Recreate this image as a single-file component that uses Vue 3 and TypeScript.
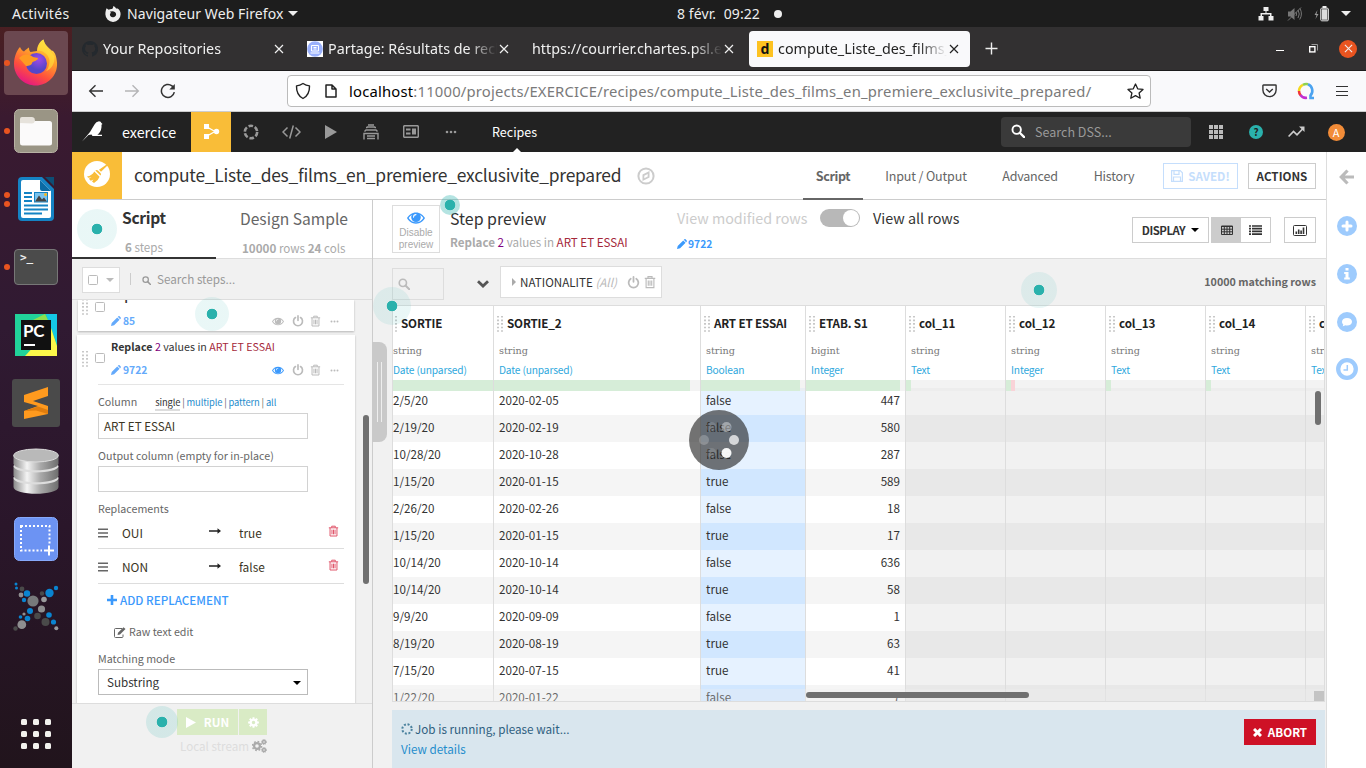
<script setup lang="ts">
interface Tab { title: string; icon: '' | 'github' | 'partage' | 'd'; active?: boolean }
interface Column { name: string; type: string; meaning: string; width: number; ok: number; bad?: number; cls?: string }
interface Ball { x: number; y: number; r: number; c: string }

const tabs: Tab[] = [
  { title: 'Your Repositories', icon: 'github' },
  { title: 'Partage: Résultats de recherche', icon: 'partage' },
  { title: 'https://courrier.chartes.psl.eu', icon: '' },
  { title: 'compute_Liste_des_films_en', icon: 'd', active: true },
]

const columns: Column[] = [
  { name: 'SORTIE', type: 'string', meaning: 'Date (unparsed)', width: 101, ok: 100, cls: 'first' },
  { name: 'SORTIE_2', type: 'string', meaning: 'Date (unparsed)', width: 207, ok: 196 },
  { name: 'ART ET ESSAI', type: 'string', meaning: 'Boolean', width: 105, ok: 99, cls: 'hl' },
  { name: 'ETAB. S1', type: 'bigint', meaning: 'Integer', width: 100, ok: 94, cls: 'num' },
  { name: 'col_11', type: 'string', meaning: 'Text', width: 100, ok: 5, cls: 'void' },
  { name: 'col_12', type: 'string', meaning: 'Integer', width: 100, ok: 5, bad: 4, cls: 'void' },
  { name: 'col_13', type: 'string', meaning: 'Text', width: 100, ok: 5, cls: 'void' },
  { name: 'col_14', type: 'string', meaning: 'Text', width: 100, ok: 5, cls: 'void' },
  { name: 'col_15', type: 'string', meaning: 'Text', width: 100, ok: 0, cls: 'void' },
]

const rows: string[][] = [
  ['2/5/20', '2020-02-05', 'false', '447'],
  ['2/19/20', '2020-02-19', 'false', '580'],
  ['10/28/20', '2020-10-28', 'false', '287'],
  ['1/15/20', '2020-01-15', 'true', '589'],
  ['2/26/20', '2020-02-26', 'false', '18'],
  ['1/15/20', '2020-01-15', 'true', '17'],
  ['10/14/20', '2020-10-14', 'false', '636'],
  ['10/14/20', '2020-10-14', 'true', '58'],
  ['9/9/20', '2020-09-09', 'false', '1'],
  ['8/19/20', '2020-08-19', 'true', '63'],
  ['7/15/20', '2020-07-15', 'true', '41'],
  ['1/22/20', '2020-01-22', 'false', '7'],
]

const balls: Ball[] = [
  { x: 3, y: 2, r: 1.5, c: '#0a84d0' }, { x: 3.5, y: 6, r: 1.5, c: '#0a84d0' }, { x: 9, y: 7, r: 2.4, c: '#4a4a4a' },
  { x: 8, y: 13, r: 2.4, c: '#8e8e90' }, { x: 14, y: 11.5, r: 3.2, c: '#0a84d0' }, { x: 11, y: 18, r: 2.2, c: '#0a84d0' },
  { x: 20, y: 19, r: 5.6, c: '#77797b' }, { x: 29, y: 11.5, r: 2.2, c: '#4a4a4a' }, { x: 36.5, y: 11, r: 4.2, c: '#0a84d0' },
  { x: 43, y: 6, r: 2.2, c: '#0a84d0' }, { x: 31, y: 17.5, r: 2.8, c: '#9a9a9c' }, { x: 28.5, y: 27, r: 3.6, c: '#8e8e90' },
  { x: 17, y: 29, r: 3, c: '#0a84d0' }, { x: 11, y: 32, r: 1.6, c: '#8e8e90' }, { x: 7.5, y: 35, r: 1.8, c: '#0a84d0' },
  { x: 14.5, y: 36.5, r: 2.8, c: '#0a84d0' }, { x: 24.5, y: 34, r: 3.3, c: '#4a4a4a' }, { x: 36, y: 33, r: 2.8, c: '#0a84d0' },
  { x: 32.5, y: 40, r: 4, c: '#4a4a4a' }, { x: 40.5, y: 40, r: 2.6, c: '#0a84d0' }, { x: 8.8, y: 42.7, r: 4.4, c: '#8e8e90' },
  { x: 2.5, y: 46.5, r: 2.2, c: '#4a4a4a' }, { x: 43.3, y: 46.3, r: 2, c: '#9a9a9c' },
]

const replacements = [
  { from: 'OUI', to: 'true' },
  { from: 'NON', to: 'false' },
]

const grid9 = [0, 1, 2, 3, 4, 5, 6, 7, 8]
</script>

<template>
  <svg class="defs" width="0" height="0">
    <defs>
      <symbol id="eye" viewBox="0 0 24 16">
        <path fill="currentColor" fill-rule="evenodd" d="M12 .5C6.500.5 2.400 3.800 0 8c2.400 4.200 6.500 7.500 12 7.500S21.600 12.200 24 8C21.600 3.800 17.500.5 12 .5zM2.200 8C3.300 6.200 4.800 4.700 6.600 3.600 5.900 4.700 5.600 5.800 5.600 7a6.400 6.400 0 0 0 12.800 0c0-1.200-.3-2.300-1-3.400 1.800 1.100 3.300 2.600 4.400 4.400-2.200 3.500-5.600 5.800-9.800 5.800S4.400 11.500 2.200 8zM12 2.800a4 4 0 0 0-3.900 4.200c0 .9 1.300.9 1.300 0A2.700 2.700 0 0 1 12 4.200c.9 0 .9-1.400 0-1.400z" />
      </symbol>
      <symbol id="power" viewBox="0 0 16 16">
        <path fill="none" stroke="currentColor" stroke-width="2.200" stroke-linecap="round" d="M4.600 3.400a6 6 0 1 0 6.800 0M8 1.200v6" />
      </symbol>
      <symbol id="trash" viewBox="0 0 16 18">
        <path fill="none" stroke="currentColor" stroke-width="1.500" d="M1 4.200h14M5.300 4V1.800h5.400V4M2.800 4.500v12h10.400v-12M5.700 7v7M8 7v7M10.300 7v7" />
      </symbol>
      <symbol id="pencil" viewBox="0 0 14 14">
        <path fill="currentColor" d="M0 14l1-4.300L8.700 2 12 5.300 4.300 13zM9.500 1.200l.9-.8q.8-.7 1.600 0l1.600 1.600q.7.800 0 1.600l-.8.9z" />
      </symbol>
      <symbol id="mag" viewBox="0 0 16 16">
        <circle cx="6.500" cy="6.500" r="4.800" fill="none" stroke="currentColor" stroke-width="2.200" />
        <path d="M10 10l5 5" stroke="currentColor" stroke-width="2.600" stroke-linecap="round" />
      </symbol>
      <symbol id="gear" viewBox="0 0 16 16">
        <circle cx="8" cy="8" r="4.200" fill="none" stroke="currentColor" stroke-width="3.400" />
        <path d="M8 .2v15.600M.2 8h15.600M2.500 2.500l11 11M13.500 2.500l-11 11" stroke="currentColor" stroke-width="2.800" stroke-dasharray="3 9.600 3" />
      </symbol>
      <symbol id="drag" viewBox="0 0 6 16">
        <path d="M1 0v16M5 0v16" stroke="currentColor" stroke-width="1.600" stroke-dasharray="1.600 1.950" />
      </symbol>
      <symbol id="x" viewBox="0 0 10 10"><path d="M1 1l8 8M9 1l-8 8" stroke="currentColor" stroke-width="1.200" /></symbol>
      <symbol id="dots" viewBox="0 0 12 4"><circle cx="2" cy="2" r="1.300" fill="currentColor" /><circle cx="6" cy="2" r="1.300" fill="currentColor" /><circle cx="10" cy="2" r="1.300" fill="currentColor" /></symbol>
    </defs>
  </svg>

  <div class="screen">
    <header class="top">
      <span class="act">Activités</span>
      <svg class="ffmono" width="16" height="16" viewBox="0 0 16 16"><path fill="#eee" fill-rule="evenodd" d="M1.600 2.200l2 1.600C4.800 3 6 2.900 7 3c1-.6 1.200-1.800 1.300-3 1.300.5 2.200 1.400 2.800 2.400l1.500.2c2 1.300 3 3.300 3 5.600A7.600 7.600 0 0 1 .4 8.500C.3 6.200.8 4 1.600 2.200zM8 5.200L5 5.500 6 7c-1.500.4-1.800 3.800 1.800 4.300 2 .2 3.500-1.300 3.300-3.300-.2-1.200-1-2-1.900-2.300z" /></svg>
      <span class="app">Navigateur Web Firefox</span>
      <i class="down"></i>
      <span class="clock">8 févr.&nbsp; 09:22</span>
      <i class="note"></i>
      <svg class="net" width="16" height="14" viewBox="0 0 16 14"><path fill="#eee" d="M5.500 0h5v4h-2v2h5v3H15.500v4.500h-5V9H12V7.500H4V9h1.500v4.500h-5V9h2V6h5V4h-2z" /></svg>
      <svg class="vol" width="15" height="14" viewBox="0 0 15 14"><path fill="#777" d="M1 4.500h2.500L7.500 1v12L3.500 9.500H1z" /><path fill="none" stroke="#777" d="M9 5q1.200 2 0 4M11 3q2.500 4 0 8M13 1.500q3 5.500-.3 11M14 .5L1 13.500" /></svg>
      <svg class="bat" width="16" height="16" viewBox="0 0 16 16"><path fill="#999" d="M3.500 4L.5 9h2L1.500 13 4.500 8h-2z" /><rect x="6.800" y="2.200" width="7.500" height="12.600" rx="1" fill="#ddd" stroke="#eee" /><rect x="8.500" y="0" width="4" height="2" fill="#eee" /><rect x="7.500" y="3" width="6" height="11" fill="none" stroke="#444" stroke-width=".7" /></svg>
      <i class="down last"></i>
    </header>

    <div class="below">
      <aside class="dock">
        <div class="slot"><i class="led"></i>
          <div class="tile"><svg width="46" height="48" viewBox="0 0 46 48">
            <defs>
              <linearGradient id="fx" x1=".8" y1="0" x2=".3" y2="1"><stop offset="0" stop-color="#fff44f" /><stop offset=".35" stop-color="#ffa52a" /><stop offset=".7" stop-color="#ff4f3d" /><stop offset="1" stop-color="#e31587" /></linearGradient>
              <radialGradient id="fg" cx=".6" cy=".3"><stop offset="0" stop-color="#a04ae8" /><stop offset="1" stop-color="#5546c8" /></radialGradient>
            </defs>
            <path fill="url(#fx)" d="M7 8c1 2 2 4 4 4.500 2-2 4-3.500 5-4 0 2 .5 3.500 1.500 4.500L24 12c0-5 3-10 6.500-11.500 1 5 5 8 8 11 3 .5 5 5 5.500 12C45 37 34 46.500 23 46.500S1 38 1 25C1 18 4 11 7 8z" />
            <circle cx="23.500" cy="24.500" r="10.500" fill="url(#fg)" />
            <path fill="#ff9a22" d="M6 19c5-5 11-4 14-1l5 1c0 3-5 3-6 5 0 2-3 3-6 3z" />
            <path fill="#ffe13c" d="M30.500.5c-3 2-6 6-6 11 5 0 11 3 12 10 0 8-4 11-4 11 7-3 9-8 9-15-3-5-9-8-11-17z" opacity=".65" />
          </svg></div>
        </div>
        <div class="slot"><i class="led"></i>
          <svg width="44" height="44" viewBox="0 0 44 44"><rect x=".5" y=".5" width="43" height="43" rx="5" fill="#9a9585" stroke="#b8b2a4" /><rect x="6" y="12" width="32" height="24.500" rx="2.500" fill="#fbfafa" /><path fill="#e6e2db" d="M6 14v-4q0-2 2-2h10q2 0 2.500 1.500L21 12q-1 2.500-3 2.500z" /></svg>
        </div>
        <div class="slot"><span class="leds"><i class="led"></i><i class="led"></i></span>
          <svg width="36" height="44" viewBox="0 0 36 44"><path fill="#1583c4" d="M4 0h20l12 12v28q0 4-4 4H4q-4 0-4-4V4q0-4 4-4z" /><path fill="#0d4e75" d="M27 0h9v9z" /><path fill="#fff" d="M5 3h17l11 11v25q0 2-2 2H5q-2 0-2-2V5q0-2 2-2z" /><path fill="#0b6aa3" d="M22 3l11 11h-9q-2 0-2-2z" /><path stroke="#1583c4" stroke-width="1.800" d="M6 16h8M6 20h8M6 24h8M6 28.500h24M6 32.500h24M6 36.500h18" /><rect x="16.500" y="15.500" width="13" height="9.500" fill="#7ac3ee" stroke="#1583c4" /><path fill="#444" d="M17 24.500l4-6 3 4 2-2 3 4z" /><circle cx="27.500" cy="17.500" r="1.500" fill="#f5b921" /></svg>
        </div>
        <div class="slot"><i class="led"></i><div class="term">&gt;_</div></div>
        <div class="slot"><div class="pycharm">
          <svg class="pybg" width="42" height="42" viewBox="0 0 42 42"><rect width="42" height="42" fill="#21d39a" /><path fill="#8fdf4f" d="M14 8L30 0l6 12-8 30H20z" /><path fill="#14c8e6" d="M31 0h11v30z" /><path fill="#fcf84a" d="M10 42l26-28 6 18v10z" /></svg>
          <div class="pc"><span>PC</span><i></i></div>
        </div></div>
        <div class="slot"><div class="sublime"><svg width="24" height="32" viewBox="0 0 24 32"><path fill="#ff9a1e" d="M0 8L24 0v9L9 14l15 5v8L0 32v-8l14-5L0 15z" /><path fill="#e07d0e" d="M0 24l14-4.500L24 23v4l-12-3.500z" /></svg></div></div>
        <div class="slot"><svg width="46" height="46" viewBox="0 0 46 46">
          <defs><linearGradient id="db"><stop offset="0" stop-color="#8a8a8a" /><stop offset=".3" stop-color="#f4f4f4" /><stop offset=".6" stop-color="#a9a9a9" /><stop offset="1" stop-color="#6e6e6e" /></linearGradient></defs>
          <path fill="url(#db)" d="M.5 29v10c0 9 45 9 45 0V29z" /><path fill="#ddd" d="M.5 30c0 8.500 45 8.500 45 0l-2-3H2z" />
          <path fill="url(#db)" d="M.5 18v9.500c0 9 45 9 45 0V18z" /><path fill="#ddd" d="M.5 18c0 8.500 45 8.500 45 0l-2-3H2z" />
          <path fill="url(#db)" d="M.5 7v8.500c0 9 45 9 45 0V7z" /><ellipse cx="23" cy="7.500" rx="22.300" ry="6.500" fill="#b9b9b9" stroke="#ddd" />
        </svg></div>
        <div class="slot"><svg width="44" height="44" viewBox="0 0 44 44"><rect x=".5" y=".5" width="43" height="43" rx="5" fill="#6c93f3" stroke="#87a9fb" /><rect x="7" y="9" width="28.500" height="24.500" fill="none" stroke="#fff" stroke-width="2" stroke-dasharray="2 2" /><path stroke="#6c93f3" stroke-width="5" d="M28 33.500h14M35 28v11" /><path stroke="#fff" stroke-width="2" d="M30 33.500h10M35 28.500v10" /></svg></div>
        <div class="slot"><svg width="46" height="50" viewBox="0 0 46 50"><circle v-for="(b, i) in balls" :key="i" :cx="b.x" :cy="b.y" :r="b.r" :fill="b.c" /></svg></div>
        <div class="apps"><i v-for="n in grid9" :key="n"></i></div>
      </aside>

      <section class="browser">
        <div class="strip">
          <div v-for="t in tabs" :key="t.title" class="tab" :class="{ active: t.active }">
            <svg v-if="t.icon === 'github'" class="fav" width="16" height="16" viewBox="0 0 16 16"><path fill="#24292e" d="M8 0a8 8 0 0 0-2.500 15.600c.4 0 .5-.2.5-.4v-1.500c-2.200.5-2.700-1-2.700-1-.4-.9-.9-1.200-.9-1.200-.7-.5 0-.5 0-.5.800.1 1.300.9 1.300.9.700 1.200 1.900.9 2.300.7.100-.5.300-.9.500-1.100C4.800 11.300 3 10.600 3 7.600c0-.9.300-1.600.8-2.200-.1-.2-.4-1 .1-2.100 0 0 .7-.2 2.200.8a7.600 7.600 0 0 1 4 0c1.500-1 2.200-.8 2.200-.8.4 1.100.2 1.900.1 2.100.5.600.8 1.300.8 2.200 0 3-1.900 3.700-3.700 3.900.3.300.6.800.6 1.500v2.200c0 .2.100.5.500.4A8 8 0 0 0 8 0z" /></svg>
            <svg v-else-if="t.icon === 'partage'" class="fav" width="16" height="16" viewBox="0 0 16 16"><rect width="16" height="16" fill="#fff" /><circle cx="8" cy="8" r="7.800" fill="#9ab0fb" /><path fill="none" stroke="#fff" d="M4.500 4.500h7v5.500h-7zM3.500 12h9M6.500 6.500h3M6.500 8h3" /></svg>
            <b v-else-if="t.icon === 'd'" class="fav dss">d</b>
            <span class="ttl">{{ t.title }}</span>
            <svg class="cls" width="10" height="10"><use href="#x" /></svg>
          </div>
          <svg class="plus" width="13" height="13" viewBox="0 0 13 13"><path stroke="#eee" stroke-width="1.400" d="M6.500.5v12M.5 6.500h12" /></svg>
          <i class="min"></i>
          <svg class="restore" width="9" height="9" viewBox="0 0 9 9"><path fill="none" stroke="#999" d="M2.500.5h6v6" /><rect x=".7" y="2.700" width="5.200" height="5.200" fill="none" stroke="#fff" stroke-width="1.400" /></svg>
          <span class="close"><svg width="9" height="9"><use href="#x" /></svg></span>
        </div>

        <div class="bar">
          <svg class="back" width="16" height="14" viewBox="0 0 16 14"><path fill="none" stroke="#333" stroke-width="1.400" d="M15 7H2M7.500 1.300L1.700 7l5.800 5.700" /></svg>
          <svg class="fwd" width="16" height="14" viewBox="0 0 16 14"><path fill="none" stroke="#b5b5b7" stroke-width="1.400" d="M1 7h13M8.500 1.300L14.300 7l-5.800 5.700" /></svg>
          <svg class="reload" width="16" height="16" viewBox="0 0 16 16"><path fill="none" stroke="#333" stroke-width="1.500" d="M14.300 9.200a6.500 6.500 0 1 1-2.300-6.300l1.500 1.500" /><path fill="#333" d="M14.800 1v5.500H9.300z" /></svg>
          <div class="url">
            <svg class="shield" width="16" height="18" viewBox="0 0 16 18"><path fill="none" stroke="#222" stroke-width="1.400" stroke-linejoin="round" d="M8 1.500c2 1.400 4 2.200 6.500 2.400C14.700 10 12.500 14 8 16.500 3.500 14 1.300 10 1.500 3.900 4 3.700 6 2.900 8 1.500z" /></svg>
            <svg class="doc" width="12" height="14" viewBox="0 0 12 14"><path fill="none" stroke="#222" stroke-width="1.500" stroke-linejoin="round" d="M1 1h6l4 4v8H1zM7 1v4h4" /></svg>
            <span class="addr"><em>localhost</em>:11000/projects/EXERCICE/recipes/compute_Liste_des_films_en_premiere_exclusivite_prepared/</span>
            <svg class="star" width="17" height="16" viewBox="0 0 17 16"><path fill="none" stroke="#222" stroke-width="1.300" stroke-linejoin="round" d="M8.500 1l2.200 4.800 5.300.6-3.900 3.600 1.100 5.200-4.700-2.600-4.700 2.600 1.100-5.200L1 6.400l5.300-.6z" /></svg>
          </div>
          <svg class="pocket" width="15" height="14" viewBox="0 0 15 14"><path fill="none" stroke="#333" stroke-width="1.400" stroke-linejoin="round" d="M1.500 1h12q.6 0 .6.600V6A6.600 6.600 0 0 1 .9 6V1.600Q.9 1 1.500 1z" /><path fill="none" stroke="#333" stroke-width="1.400" d="M4.200 5l3.300 3 3.300-3" /></svg>
          <svg class="qwant" width="18" height="18" viewBox="0 0 18 18"><g fill="none" stroke-width="2.600"><path stroke="#c22fd0" d="M3.200 12.800A7 7 0 0 0 10 15.800" /><path stroke="#f5d91e" d="M2 9A7 7 0 0 1 6 2.900" /><path stroke="#8fd14f" d="M6 2.900A7 7 0 0 1 11 2.300" /><path stroke="#4ba3f0" d="M11 2.300A7 7 0 0 1 13.500 13.500V16H17" /><path stroke="#f0353a" d="M2 9a7 7 0 0 0 1.400 4" /></g></svg>
          <i class="menu"></i>
        </div>

        <nav class="nav">
          <svg class="bird" width="22" height="22" viewBox="0 0 22 22"><path fill="#fff" d="M0 20.500L8 11l4.500-7.500Q14 .5 17 .3q2 0 2.400 1.700l1.100 1-1 .7q.6 5.600-3.200 9.300l-1 .8H20v1.200h-9.500L9.500 13.500 6.500 14z" /></svg>
          <span class="proj">exercice</span>
          <div class="cell flow"><svg width="17" height="17" viewBox="0 0 17 17"><path fill="#fff" d="M1 1h5v5H1zM1 11h5v5H1z" /><path stroke="#fff" stroke-width="1.300" fill="none" d="M4 4l8 4.500L4 13" /><circle cx="13.500" cy="8.500" r="2.700" fill="#fff" /></svg></div>
          <div class="cell"><svg width="16" height="16" viewBox="0 0 16 16"><circle cx="8" cy="8" r="6.200" fill="none" stroke="#999" stroke-width="2.600" stroke-dasharray="4.600 1.890" /></svg></div>
          <div class="cell"><svg width="19" height="14" viewBox="0 0 19 14"><path fill="none" stroke="#999" stroke-width="1.500" d="M5.500 2.500L1 7l4.500 4.500M13.500 2.500L18 7l-4.500 4.500M11.300.5L7.700 13.500" /></svg></div>
          <div class="cell"><svg width="12" height="14" viewBox="0 0 12 14"><path fill="#999" d="M0 0l12 7-12 7z" /></svg></div>
          <div class="cell"><svg width="16" height="16" viewBox="0 0 16 16"><path fill="none" stroke="#999" stroke-width="1.400" d="M5 1h6M3 3.500h1l.5-.5h7l.5.5h1M1.500 7.500L3 6h10l1.500 1.500M1 15.500V9.500h14v6M4 12h8M4 14.500h8" /></svg></div>
          <div class="cell"><svg width="16" height="13" viewBox="0 0 16 13"><rect x=".7" y=".7" width="14.600" height="11.600" rx="1" fill="none" stroke="#999" stroke-width="1.500" /><path fill="#999" d="M3 3.500h4.500v2H3zM3 7.500h4.500v2H3zM9 3.500h4v6H9z" /></svg></div>
          <div class="cell"><svg width="12" height="4" class="g9"><use href="#dots" /></svg></div>
          <span class="rec">Recipes<i></i></span>
          <div class="srch"><svg width="14" height="14"><use href="#mag" /></svg><span>Search DSS...</span></div>
          <div class="cell r1"><div class="nine"><i v-for="n in grid9" :key="n"></i></div></div>
          <div class="cell"><b class="help">?</b></div>
          <div class="cell"><svg width="17" height="12" viewBox="0 0 17 12"><path fill="none" stroke="#ccc" stroke-width="1.700" d="M.6 10.500l4.900-5 3.500 3.300L15.500 2" /><path fill="#ccc" d="M11 .5h5.500V6z" /></svg></div>
          <div class="cell"><span class="ava">A</span></div>
        </nav>

        <div class="page">
          <main class="main">
            <div class="head">
              <div class="brush"><svg width="26" height="26" viewBox="0 0 26 26"><circle cx="13" cy="13" r="13" fill="#fff" /><path fill="#f9bd38" d="M22.500 3.500l1 1-6.500 6.300-2-2zM14 9.500l2.700 2.700q.8 1.300-.2 2.300l-5.200-4.900q1.300-1 2.700-.1zM10.300 10.500l5.300 5.200q-1.500 4.300-5.600 6.300l-2-1.500 1.500-2-2.700 1.200-2-2 2.700-1.500-3.300.6L3 15.500q5-.8 7.300-5z" /></svg></div>
              <h1>compute_Liste_des_films_en_premiere_exclusivite_prepared</h1>
              <svg class="compass" width="18" height="18" viewBox="0 0 18 18"><circle cx="9" cy="9" r="7.600" fill="none" stroke="#ccc" stroke-width="2" /><path fill="#ccc" fill-rule="evenodd" d="M12.500 4v6.500L5.500 14V7.500zM10.700 7L7.300 8.700v2.600l3.400-1.800z" /></svg>
              <div class="tabsR"><b class="on">Script</b><span class="w1">Input / Output</span><span class="w2">Advanced</span><span class="w3">History</span></div>
              <div class="btn saved"><svg width="12" height="12" viewBox="0 0 12 12"><path fill="none" stroke="#c5defc" stroke-width="1.200" d="M.6.6h8.600l2.200 2.200v8.600H.6zM3 .6v3.800h5V.6M2.500 11.400V7h7v4.400" /></svg>SAVED!</div>
              <div class="btn actions">ACTIONS</div>
            </div>

            <div class="cols">
              <div class="left">
                <div class="ltabs">
                  <div class="lt a"><b>Script</b><span><b>6</b> steps</span></div>
                  <div class="lt b"><em>Design Sample</em><span><b>10000</b> rows <b>24</b> cols</span></div>
                </div>
                <div class="tools">
                  <div class="selall"><i class="cb"></i><i class="tri"></i></div>
                  <i class="vbar"></i>
                  <svg class="m" width="9" height="9"><use href="#mag" /></svg>
                  <span>Search steps...</span>
                </div>
                <div class="list">
                  <div class="step s1">
                    <b class="peek">Replace</b>
                    <svg class="drag" width="6" height="16"><use href="#drag" /></svg><i class="cb"></i>
                    <div class="meta"><svg width="10" height="10"><use href="#pencil" /></svg><b>85</b>
                      <svg class="e" width="12" height="9"><use href="#eye" /></svg><svg class="p" width="12" height="12"><use href="#power" /></svg><svg class="t" width="11" height="12"><use href="#trash" /></svg><svg class="o" width="9" height="3"><use href="#dots" /></svg>
                    </div>
                  </div>
                  <div class="step s2">
                    <div class="sh">
                      <svg class="drag" width="6" height="16"><use href="#drag" /></svg><i class="cb"></i>
                      <div class="txt"><b>Replace</b> <u>2</u> values in <s>ART ET ESSAI</s></div>
                      <div class="meta"><svg width="10" height="10"><use href="#pencil" /></svg><b>9722</b>
                        <svg class="e on" width="12" height="9"><use href="#eye" /></svg><svg class="p" width="12" height="12"><use href="#power" /></svg><svg class="t" width="11" height="12"><use href="#trash" /></svg><svg class="o" width="9" height="3"><use href="#dots" /></svg>
                      </div>
                    </div>
                    <div class="form">
                      <div class="lab l1"><span>Column</span><p><ins>single</ins> | <a>multiple</a> | <a>pattern</a> | <a>all</a></p></div>
                      <div class="inp">ART ET ESSAI</div>
                      <div class="lab l2">Output column (empty for in-place)</div>
                      <div class="inp"></div>
                      <div class="lab l3">Replacements</div>
                      <div v-for="r in replacements" :key="r.from" class="rep">
                        <svg class="burger" width="10" height="10" viewBox="0 0 10 10"><path stroke="#666" stroke-width="1.500" d="M0 1.250h10M0 5h10M0 8.750h10" /></svg><span class="k">{{ r.from }}</span>
                        <svg class="arr" width="12" height="6" viewBox="0 0 12 6"><path fill="#222" d="M0 2.200h8.500V.3L12 3 8.500 5.700V3.800H0z" /></svg>
                        <span class="v">{{ r.to }}</span><svg class="del" width="11" height="12"><use href="#trash" /></svg>
                      </div>
                      <div class="add"><svg width="10" height="10" viewBox="0 0 10 10"><path stroke="#3b99fc" stroke-width="2.600" d="M5 0v10M0 5h10" /></svg>ADD REPLACEMENT</div>
                      <div class="raw"><svg width="12" height="11" viewBox="0 0 12 11"><path fill="none" stroke="#666" d="M8 1.500H1.500Q.5 1.500.5 2.500v7q0 1 1 1H8q1 0 1-1V7.500" /><path fill="#666" d="M3.500 8L4 5.700 9.500.2l2 1.900L6 7.600z" /></svg>Raw text edit</div>
                      <div class="lab l4">Matching mode</div>
                      <div class="inp sel">Substring<i></i></div>
                    </div>
                  </div>
                  <i class="thumb"></i>
                </div>
                <div class="foot">
                  <div class="run"><span><svg width="10" height="11" viewBox="0 0 10 11"><path fill="#fff" d="M0 0l10 5.500L0 11z" /></svg>RUN</span><span class="cog"><svg width="11" height="11"><use href="#gear" /></svg></span></div>
                  <div class="ls">Local stream<svg width="15" height="14" viewBox="0 0 15 14"><g fill="none" stroke="#aaa"><circle cx="5" cy="7" r="2.900" stroke-width="2.200" /><circle cx="5" cy="7" r="4.500" stroke-width="1.600" stroke-dasharray="1.700 1.830" /><circle cx="12" cy="3" r="1.500" stroke-width="1.500" /><circle cx="12" cy="11" r="1.500" stroke-width="1.500" /><circle cx="12" cy="3" r="2.500" stroke-dasharray="1 1" /><circle cx="12" cy="11" r="2.500" stroke-dasharray="1 1" /></g></svg></div>
                </div>
              </div>

              <div class="right">
                <div class="ph">
                  <div class="dis"><svg width="18" height="12"><use href="#eye" /></svg><span>Disable<br />preview</span></div>
                  <div class="sp"><em>Step preview</em><p><b>Replace</b> <u>2</u> values in <s>ART ET ESSAI</s></p></div>
                  <div class="vm"><em>View modified rows</em><p><svg width="10" height="10"><use href="#pencil" /></svg>9722</p></div>
                  <i class="toggle"></i>
                  <span class="va">View all rows</span>
                  <div class="btn disp"><span>DISPLAY</span><i></i></div>
                  <div class="grp">
                    <span class="on"><svg width="12" height="10" viewBox="0 0 12 10"><path fill="none" stroke="#333" d="M.5 1h11v8.500H.5zM0 1.500h12M0 4.200h12M0 6.800h12M3.300 1v8M6 1v8M8.700 1v8" /></svg></span>
                    <span><svg width="13" height="10" viewBox="0 0 13 10"><path stroke="#333" stroke-width="1.700" d="M0 1h2M3 1h10M0 3.700h2M3 3.700h10M0 6.400h2M3 6.400h10M0 9.100h2M3 9.100h10" /></svg></span>
                  </div>
                  <div class="btn chart"><svg width="14" height="11" viewBox="0 0 14 11"><rect x=".5" y=".5" width="13" height="10" rx="1" fill="none" stroke="#333" /><path fill="#333" d="M2.500 6.500h1.600V9H2.500zM4.900 4.500h1.600V9H4.900zM7.300 5.500h1.600V9H7.300zM9.700 2.500h1.600V9H9.700z" /></svg></div>
                </div>
                <div class="fb">
                  <div class="fs"><svg width="12" height="12"><use href="#mag" /></svg></div>
                  <svg class="chev" width="12" height="8" viewBox="0 0 12 8"><path fill="none" stroke="#555" stroke-width="2.800" d="M1 1.200l5 4.800 5-4.800" /></svg>
                  <div class="nat"><i></i><span>NATIONALITE <em>(All)</em></span><svg class="np" width="13" height="13"><use href="#power" /></svg><svg width="12" height="14"><use href="#trash" /></svg></div>
                  <b class="mr">10000 matching rows</b>
                </div>

                <div class="table">
                  <div class="thead">
                    <div v-for="c in columns" :key="c.name" class="th" :class="c.cls" :style="{ width: c.width + 'px' }">
                      <div class="nm"><svg class="drag" width="6" height="16"><use href="#drag" /></svg><b>{{ c.name }}</b></div>
                      <div class="ty">{{ c.type }}</div>
                      <div class="mn">{{ c.meaning }}</div>
                    </div>
                  </div>
                  <div class="tbody">
                    <div v-for="(r, i) in rows" :key="i" class="tr" :class="{ odd: i % 2 }">
                      <span v-for="(c, j) in columns" :key="c.name" class="td" :class="c.cls" :style="{ width: c.width + 'px' }">{{ r[j] }}</span>
                    </div>
                  </div>
                  <div class="quality">
                    <span v-for="c in columns" :key="c.name" :style="{ width: c.width + 'px' }"><i class="ok" :style="{ width: c.ok + 'px' }"></i><i class="bad" :style="{ width: (c.bad || 0) + 'px' }"></i></span>
                  </div>
                  <i class="htrack"></i><i class="hthumb"></i><i class="vthumb"></i><i class="corner"></i>
                </div>

                <div class="job">
                  <div class="jt">
                    <p><svg width="12" height="12" viewBox="0 0 12 12"><circle cx="6" cy="6" r="4.700" fill="none" stroke="#31708f" stroke-width="2" stroke-dasharray="2 1.690" opacity=".85" /></svg>Job is running, please wait...</p>
                    <a>View details</a>
                  </div>
                  <div class="abort"><svg width="9" height="9" viewBox="0 0 9 9"><path stroke="#fff" stroke-width="3" d="M1 1l7 7M8 1L1 8" /></svg>ABORT</div>
                </div>
              </div>
            </div>
          </main>

          <aside class="rail">
            <svg class="ra" width="16" height="16" viewBox="0 0 16 16"><path fill="none" stroke="#bbb" stroke-width="3.200" d="M15 8H3M8.500 1.500L2.300 8l6.200 6.500" /></svg>
            <svg class="rb" width="20" height="20" viewBox="0 0 20 20"><circle cx="10" cy="10" r="10" fill="#9ecbfd" /><path stroke="#fff" stroke-width="3" stroke-linecap="round" d="M10 6v8M6 10h8" /></svg>
            <svg class="rc" width="20" height="20" viewBox="0 0 20 20"><circle cx="10" cy="10" r="10" fill="#9ecbfd" /><path fill="#fff" d="M8.500 4h3v2.500h-3zM7.200 8h4.300v5.500h1.300v2H7.200v-2h1.300V10H7.200z" /></svg>
            <svg class="rc" width="20" height="20" viewBox="0 0 20 20"><circle cx="10" cy="10" r="10" fill="#9ecbfd" /><path fill="#fff" d="M10 6c3 0 5 1.600 5 3.700s-2 3.800-5 3.800c-.7 0-1.300-.1-1.800-.2-.8.700-1.700 1-2.700 1 .5-.5.800-1.100.8-1.900C5.500 11.700 5 10.800 5 9.700 5 7.600 7 6 10 6z" /></svg>
            <svg class="rd" width="22" height="22" viewBox="0 0 22 22"><circle cx="11" cy="11" r="8.800" fill="#fff" stroke="#9ecbfd" stroke-width="4.300" /><path fill="none" stroke="#9ecbfd" stroke-width="1.500" d="M11.300 7v5H7.500" /></svg>
          </aside>
        </div>
      </section>
    </div>

    <i class="handle"></i>
    <i class="pulse p1"></i><i class="pulse p2"></i><i class="pulse p3"></i><i class="pulse p4"></i><i class="pulse p5"></i><i class="pulse p6"></i>
    <svg class="spin" width="60" height="60" viewBox="0 0 60 60"><circle cx="30" cy="30" r="30" fill="#222" fill-opacity=".62" /><g fill="#fff"><circle cx="37.500" cy="17" r="5" opacity=".4" /><circle cx="45" cy="30" r="5" opacity=".72" /><circle cx="37.500" cy="43" r="5" opacity=".95" /><circle cx="15" cy="30" r="5" opacity=".22" /><circle cx="22.500" cy="17" r="5" opacity=".12" /><circle cx="22.500" cy="43" r="5" opacity=".12" /></g></svg>
  </div>
</template>

<style>
body { margin: 0; overflow: hidden; }
</style>

<style scoped>
* { box-sizing: border-box; }
.defs { position: absolute; }
svg { display: block; flex: none; }
i, em { font-style: normal; }
i { display: block; flex: none; }
p, h1 { margin: 0; font-weight: 400; }
u, s, a, ins { text-decoration: none; }
.screen { position: relative; width: 1366px; height: 768px; overflow: hidden; font-family: "Noto Sans CJK SC", "Noto Sans", sans-serif; font-size: 11.640px; line-height: 16px; color: #333; white-space: nowrap; background: #fff; }

.top { height: 27px; background: #1d1d1d; color: #eee; display: flex; align-items: center; font: 14px/27px "Noto Sans", sans-serif; }
.act { width: 92px; padding-left: 12px; letter-spacing: .3px; }
.ffmono { margin-left: 13px; }
.app { margin-left: 6px; width: 157px; letter-spacing: .1px; }
.down { border: 5px solid transparent; border-top-color: #eee; border-bottom: 0; margin-left: 4px; }
.clock { margin-left: 379px; width: 84px; letter-spacing: .1px; }
.note { width: 8px; height: 8px; border-radius: 50%; background: #eee; margin-left: 13px; }
.net { margin-left: 476px; }
.vol { margin-left: 13px; }
.bat { margin-left: 12px; }
.down.last { margin-left: 11px; }

.below { display: flex; height: 741px; }
.dock { width: 72px; flex: none; background: linear-gradient(#4a1f22 0, #3a1a30 90px, #301a32 300px, #2a162a 500px, #21141c 741px); padding-top: 2px; }
.slot { height: 68px; display: flex; align-items: center; justify-content: center; position: relative; }
.led { width: 6px; height: 6px; border-radius: 50%; background: #e95420; position: absolute; left: 4px; top: 31px; }
.leds .led:first-child { top: 27px; }
.leds .led:last-child { top: 36px; }
.tile { width: 64px; height: 64px; border-radius: 4px; background: #6b4850; display: flex; align-items: center; justify-content: center; }
.term { width: 44px; height: 36px; border-radius: 4px; border: 1px solid #777; background: #4b4b4b; color: #eee; font: bold 11px/14px "DejaVu Sans Mono", monospace; padding: 1px 5px; }
.pycharm { width: 42px; height: 42px; display: grid; place-items: center; }
.pybg, .pc { grid-area: 1 / 1; }
.pc { width: 30px; height: 30px; background: #111; padding: 1px 2px; color: #fff; font: bold 17px/19px Lato, sans-serif; letter-spacing: -.3px; }
.pc i { width: 11px; height: 2px; background: #fff; margin: 4px 0 0 1px; }
.sublime { width: 48px; height: 48px; border-radius: 3px; background: #4a4a4a; display: flex; align-items: center; justify-content: center; }
.apps { display: grid; grid-template-columns: repeat(3, 6px); gap: 6px; margin: 78px 0 0 21px; }
.apps i { height: 6px; background: #f2f1ee; border-radius: 1.500px; }

.browser { width: 1294px; }
.strip { height: 44px; background: #323031; border-bottom: 1px solid #1c1b1c; display: flex; align-items: center; padding: 0 0 0 2px; color: #f0f0f0; }
.tab { width: 221px; margin-right: 4px; height: 36px; display: flex; align-items: center; padding-left: 8px; font: 14.300px/36px "Noto Sans", sans-serif; border-radius: 4px; }
.tab.active { background: #f9f9fb; color: #222; margin-right: 0; }
.fav { margin-right: 5px; }
.dss { width: 16px; height: 16px; background: #fdc221; color: #111; font: bold 14px/15px "Noto Sans", sans-serif; text-align: center; }
.ttl { flex: 1; overflow: hidden; margin-right: 2px; letter-spacing: .02px; -webkit-mask: linear-gradient(90deg, #000 calc(100% - 28px), transparent); mask: linear-gradient(90deg, #000 calc(100% - 28px), transparent); }
.cls { margin-right: 11px; }
.plus { margin-left: 15px; }
.min { width: 8px; height: 1px; background: #fff; margin: 4px 0 0 278px; }
.restore { margin-left: 25px; }
.close { width: 18px; height: 18px; border-radius: 50%; background: #e95420; margin-left: 21px; display: flex; align-items: center; justify-content: center; }
.bar { height: 41px; background: #f9f9fb; border-bottom: 1px solid #ccc; display: flex; align-items: center; }
.back { margin-left: 16px; }
.fwd { margin-left: 20px; }
.reload { margin-left: 20px; }
.url { width: 864px; height: 32px; margin-left: 111px; border: 1px solid #bbb; border-radius: 4px; background: #fff; display: flex; align-items: center; }
.shield { margin-left: 7px; }
.doc { margin-left: 14px; }
.addr { margin-left: 12px; width: 778px; color: #7a7a7a; font: 14.800px/30px "Noto Sans", sans-serif; letter-spacing: .2px; }
.addr em { color: #000; }
.pocket { margin-left: 111px; }
.qwant { margin-left: 20px; }
.menu { width: 12px; height: 10px; margin-left: 21px; border-top: 1px solid #333; border-bottom: 1px solid #333; background: linear-gradient(#333, #333) 0 50% / 100% 1px no-repeat; }

.nav { height: 40px; background: #222; display: flex; align-items: center; color: #fff; }
.bird { margin-left: 10px; }
.proj { margin-left: 18px; width: 69px; font-size: 14.330px; }
.cell { width: 40px; height: 40px; display: flex; align-items: center; justify-content: center; padding-bottom: 1px; }
.flow { background: #f9bd38; }
.g9 { color: #999; }
.rec { width: 51px; margin-left: 21px; font-size: 12.540px; line-height: 40px; position: relative; }
.rec i { position: absolute; left: 21px; bottom: 0; border: 4px solid transparent; border-bottom-color: #fff; border-top: 0; }
.srch { width: 190px; height: 30px; margin-left: 458px; border-radius: 4px; background: #3a3a3a; display: flex; align-items: center; padding-left: 10px; font-size: 12.540px; color: #999; }
.srch svg { color: #fff; margin: 0 10px 2px 0; }
.r1 { margin-left: 5px; }
.nine { display: grid; grid-template-columns: repeat(3, 4px); gap: 1px; }
.nine i { height: 4px; background: #bbb; }
.help { width: 14px; height: 14px; border-radius: 50%; background: #2ab1ac; color: #222; font-size: 10px; line-height: 13px; text-align: center; }
.ava { width: 17px; height: 17px; border-radius: 50%; background: #f28c38; text-align: center; line-height: 16px; font-size: 11px; margin-top: 2px; }

.page { display: flex; height: 616px; }
.main { width: 1254px; flex: none; }
.head { height: 48px; border-bottom: 1px solid #ccc; display: flex; align-items: center; }
.brush { width: 50px; height: 47px; background: #f9bd38; padding: 9px 0 0 12px; }
h1 { margin-left: 12px; width: 503px; font-size: 17.400px; letter-spacing: -.22px; line-height: 26px; padding-bottom: 1px; }
.tabsR { margin-left: 148px; height: 47px; display: flex; line-height: 47px; font-size: 12.540px; color: #666; text-align: center; }
.tabsR .on { width: 60px; height: 48px; border-bottom: 2px solid #666; letter-spacing: -.4px; }
.w1 { width: 126px; letter-spacing: -.15px; }
.w2 { width: 82px; letter-spacing: -.2px; }
.w3 { width: 86px; letter-spacing: -.2px; }
.btn { height: 26px; border: 1px solid #ccc; background: #fff; display: flex; align-items: center; justify-content: center; font-weight: 700; line-height: 24px; font-size: 11.640px; }
.saved { width: 75px; margin-left: 6px; color: #c5defc; border-color: #c5defc; gap: 5px; }
.actions { width: 68px; margin-left: 10px; }

.cols { display: flex; height: 568px; }
.left { width: 301px; border-right: 1px solid #ccc; background: #f1f1f1; flex: none; }
.ltabs { height: 59px; display: flex; background: #fff; border-bottom: 1px solid #ddd; }
.lt { padding-top: 6px; font-size: 15.600px; line-height: 22px; }
.lt > b, .lt > em { display: block; }
.lt > b { letter-spacing: -.3px; }
.lt span { display: block; font-size: 11.640px; line-height: 18px; color: #aaa; }
.a { width: 144px; height: 59px; border-bottom: 2px solid #333; padding-left: 50px; }
.a span { padding: 10px 0 0 3px; }
.b { padding: 7px 0 0 24px; color: #666; }
.b span { padding: 10px 0 0 2px; }
.tools { height: 40px; display: flex; align-items: center; color: #999; font-size: 11.700px; }
.selall { width: 38px; height: 26px; border: 1px solid #ddd; background: #fff; margin: 2px 0 0 10px; display: flex; align-items: center; gap: 8px; padding-left: 5px; }
.cb { width: 10px; height: 10px; border: 1px solid #bbb; border-radius: 1.500px; background: #fff; }
.tri { border: 4px solid transparent; border-top-color: #bbb; border-bottom: 0; }
.vbar { width: 1px; height: 12px; background: #ccc; margin: 0 11px 0 10px; }
.tools .m { margin: 2px 6px 0 0; }
.list { height: 404px; overflow: hidden; position: relative; padding: 0 0 0 5px; border-top: 1px solid #ddd; }
.step { position: relative; background: #fff; box-shadow: 0 1px 2px rgba(0,0,0,.25); }
.peek { position: absolute; left: 33px; top: -12px; font-size: 10.750px; }
.drag { color: #bbb; }
.s1 { width: 276px; height: 31px; margin: 0 0 4px 1px; display: flex; flex-wrap: wrap; padding-left: 4px; }
.s1 .drag { margin-top: -1px; }
.s1 .cb, .sh .cb { margin: 2px 0 0 7px; }
.s1 .meta { width: 260px; margin: -4px 0 0 29px; }
.meta { display: flex; align-items: center; height: 16px; color: #64aafb; }
.meta b { margin-left: 2px; font-size: 10.300px; width: 149px; }
.meta .e { color: #bbb; }
.meta .e.on { color: #3b99fc; }
.meta .p { color: #bbb; margin-left: 8px; }
.meta .t { color: #bbb; margin-left: 6px; }
.meta .o { color: #bbb; margin-left: 9px; }
.s2 { width: 278px; height: 371px; }
.sh { display: grid; grid-template-columns: 6px 10px 1fr; grid-template-rows: 16px 24px; padding: 3px 0 0 5px; height: 49px; }
.sh .drag { grid-row: 1 / 3; margin-top: 13px; }
.sh .cb { grid-row: 1 / 3; margin-top: 15px; }
.sh .txt { margin-left: 13px; font-size: 10.700px; height: 16px; line-height: 18px; }
.sh .meta { margin: 8px 0 0 13px; }
u { color: #800080; }
s { color: #a5283a; }
.form { margin: 0 11px 0 21px; border-top: 1px solid #e5e5e5; color: #666; font-size: 10.700px; }
.lab { display: flex; }
.l1 { padding-top: 9px; height: 28px; }
.l1 p { margin-left: 18px; font-size: 9.400px; letter-spacing: -.14px; line-height: 17px; color: #666; }
.l1 a { color: #1f8dcc; }
.l1 ins { color: #333; border-bottom: 2px solid #ddd; }
.inp { width: 210px; height: 26px; border: 1px solid #d2d2d2; padding-left: 5px; line-height: 23px; font-size: 11.640px; color: #3b3524; background: #fff; }
.l2 { padding-top: 9px; height: 27px; }
.l3 { padding-top: 9px; height: 25px; }
.rep { height: 32px; border-bottom: 1px solid #ddd; display: flex; align-items: center; color: #3b3524; font-size: 11.900px; }
.rep + .rep { height: 35px; padding-top: 2px; }
.k { margin-left: 14px; width: 87px; }
.v { margin-left: 18px; width: 89px; }
.arr { margin-top: -3px; }
.del { color: #e0566b; margin-top: -4px; }
.add { display: flex; align-items: center; margin: 8px 0 0 9px; height: 16px; gap: 3px; color: #3b99fc; font-weight: 500; font-size: 11.640px; }
.raw { display: flex; align-items: center; margin: 16px 0 0 16px; height: 16px; gap: 3px; }
.l4 { padding-top: 11px; height: 29px; }
.sel { border-color: #bbb; padding-left: 8px; color: #333; position: relative; }
.sel i { position: absolute; right: 6px; top: 11px; border: 4px solid transparent; border-top-color: #000; border-bottom: 0; }
.thumb { position: absolute; left: 291px; top: 115px; width: 6px; height: 169px; border-radius: 3px; background: #707070; }
.foot { height: 65px; border-top: 1px solid #ddd; padding: 5px 0 0 105px; }
.run { display: flex; gap: 1px; color: #fff; font-weight: 700; font-size: 11.640px; }
.run span { width: 61px; height: 26px; background: #d9ebc5; display: flex; align-items: center; justify-content: center; gap: 8px; }
.run .cog { width: 28px; }
.ls { display: flex; align-items: center; gap: 3px; margin: 3px 0 0 3px; color: #ddd; font-size: 11.640px; }

.right { width: 953px; background: #f1f1f1; flex: none; padding-left: 19px; }
.ph { height: 59px; background: #fff; border-bottom: 1px solid #ddd; margin-left: -19px; padding-left: 19px; display: flex; }
.dis { width: 48px; height: 48px; margin-top: 5px; border: 1px solid #ddd; display: flex; flex-direction: column; align-items: center; color: #aaa; font: 10px/12px "Liberation Sans", sans-serif; text-align: center; padding-top: 6px; }
.dis svg { color: #3b99fc; margin-bottom: 3px; }
.sp { margin: 7px 0 0 10px; width: 227px; color: #aaa; font-size: 11.600px; }
.sp em { display: block; font-size: 15.950px; line-height: 22px; color: #333; }
.sp p { margin-top: 5px; line-height: 17px; }
.vm { margin: 7px 0 0 0; width: 143px; color: #ccc; }
.vm em { display: block; font-size: 14.330px; line-height: 22px; }
.vm p { display: flex; align-items: center; gap: 1px; color: #3b99fc; font-weight: 700; font-size: 10.300px; margin-top: 7px; line-height: 16px; }
.toggle { width: 40px; height: 18px; border-radius: 9px; background: #b8b8b8; margin-top: 9px; padding: 1px 1px 1px 23px; }
.toggle::after { content: ""; display: block; width: 16px; height: 16px; border-radius: 50%; background: #fff; }
.va { margin: 7px 0 0 13px; width: 259px; font-size: 14.330px; line-height: 22px; }
.disp { width: 77px; margin-top: 17px; gap: 6px; line-height: 22px; }
.disp span { font-size: 11.400px; letter-spacing: -.5px; padding-bottom: 1px; }
.disp i { border: 4px solid transparent; border-top-color: #000; border-bottom: 0; }
.grp { width: 60px; height: 26px; margin: 17px 0 0 2px; border: 1px solid #ccc; display: flex; }
.grp span { flex: 1; display: flex; align-items: center; justify-content: center; padding-bottom: 1px; }
.grp .on { background: #ccc; }
.chart { width: 32px; margin: 17px 0 0 13px; }
.fb { height: 46px; display: flex; align-items: center; }
.fs { width: 52px; height: 32px; border: 1px solid #ddd; padding: 9px 5px; color: #bbb; margin-top: 3px; }
.chev { margin: 4px 0 0 33px; }
.nat { width: 162px; height: 32px; border: 1px solid #ddd; background: #fff; margin-left: 11px; display: flex; align-items: center; color: #bbb; padding-left: 11px; }
.nat i { border: 4px solid transparent; border-left-color: #aaa; border-right: 0; margin-right: 4px; }
.nat span { color: #333; width: 107px; }
.nat em { font-style: italic; color: #bbb; }
.np { margin-right: 4px; }
.mr { margin-left: auto; margin-right: 10px; color: #666; font-size: 10.700px; }
.table { position: relative; width: 933px; height: 397px; border: 1px solid #ddd; background: #fff; overflow: hidden; }
.thead, .tr, .quality { display: flex; width: 1100px; }
.thead { height: 82px; }
.th { border-right: 1px solid #ddd; padding-left: 5px; overflow: hidden; }
.nm { display: flex; align-items: center; height: 18px; margin: 9px 0 0 -2px; color: #222; }
.nm b { margin: -2px 0 0 4px; letter-spacing: -.15px; }
.ty { font: 9.700px/14px "DejaVu Serif", serif; color: #777; margin-top: 11px; }
.mn { font-size: 10.200px; letter-spacing: -.15px; line-height: 16px; color: #2fa8dd; margin-top: 4px; }
.th.first { padding-left: 0; }
.tr { height: 27px; line-height: 23px; background: #fff; }
.td { border-right: 1px solid #ddd; padding: 0 5px; flex: none; height: 27px; }
.td.first { padding-left: 0; }
.th, .quality span { flex: none; }
.tr.odd { background: #f5f5f5; }
.hl.td { background: #e6f2ff; }
.odd .hl.td { background: #d1e7ff; }
.num.td { text-align: right; }
.void.td { background: #f1f1f1; }
.odd .void.td { background: #e8e8e8; }
.quality { position: absolute; left: 0; top: 74px; height: 11px; }
.quality span { display: flex; border-right: 1px solid #ddd; background: rgba(235,235,235,.6); }
.ok { background: #d6edd8; }
.bad { background: #f9d3d8; }
.htrack { position: absolute; left: 0; right: 0; bottom: 0; height: 12px; background: rgba(240,240,240,.3); }
.hthumb { position: absolute; left: 413px; top: 386px; width: 223px; height: 6px; border-radius: 3px; background: #707070; }
.vthumb { position: absolute; left: 922px; top: 85px; width: 6px; height: 34px; border-radius: 3px; background: #707070; }
.corner { position: absolute; right: 0; bottom: 0; width: 10px; height: 10px; background: #c4c4c4; }
.job { width: 933px; height: 58px; margin-top: 8px; background: #d9e6ee; display: flex; justify-content: space-between; padding: 9px 9px 0; }
.jt { font-size: 11.700px; color: #2f5f80; line-height: 20px; }
.jt p { display: flex; align-items: center; gap: 2px; }
.jt a { color: #1f8dcc; }
.abort { width: 72px; height: 26px; background: #ce1126; color: #fff; font-weight: 700; font-size: 11.640px; display: flex; align-items: center; justify-content: center; gap: 6px; }

.rail { flex: 1; border-left: 1px solid #ddd; display: flex; flex-direction: column; align-items: center; background: #fff; padding-left: 1px; }
.ra { margin-top: 17px; }
.rb { margin-top: 31px; }
.rc { margin-top: 28px; }
.rd { margin-top: 26px; }

.handle { position: absolute; left: 372px; top: 342px; width: 15px; height: 100px; border-radius: 0 8px 8px 0; background: linear-gradient(#eee, #eee) 5px 50% / 1px 60px no-repeat, linear-gradient(#eee, #eee) 9px 50% / 1px 60px no-repeat, #c9c9c9; }
.pulse { position: absolute; border-radius: 50%; background: radial-gradient(circle, #2ab1ac 5px, rgba(42,177,172,.1) 5.600px); }
.p1 { left: 77px; top: 209px; width: 40px; height: 40px; }
.p2 { left: 195px; top: 297px; width: 34px; height: 34px; }
.p3 { left: 440px; top: 195px; width: 20px; height: 20px; background: radial-gradient(circle, #2ab1ac 5px, rgba(42,177,172,.35) 5.600px); }
.p4 { left: 373px; top: 287px; width: 38px; height: 38px; }
.p5 { left: 1021px; top: 272px; width: 36px; height: 36px; }
.p6 { left: 146px; top: 706px; width: 32px; height: 32px; background: radial-gradient(circle, #2ab1ac 5px, rgba(42,177,172,.15) 5.600px); }
.spin { position: absolute; left: 689px; top: 410px; }
</style>
